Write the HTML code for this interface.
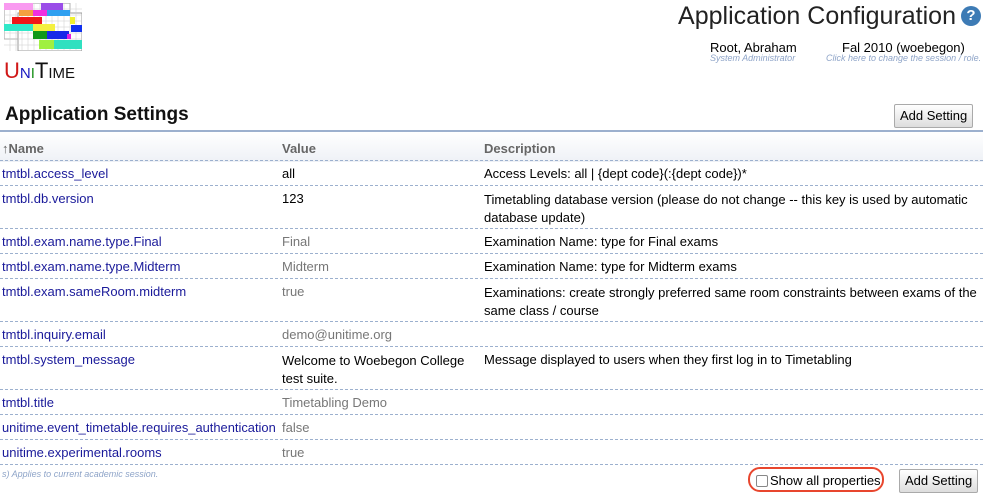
<!DOCTYPE html>
<html><head><meta charset="utf-8"><style>
body{margin:0;width:983px;height:495px;position:relative;font-family:"Liberation Sans",Arial,sans-serif;font-size:13px;background:#fff;overflow:hidden}
.a{position:absolute;white-space:nowrap}
.n{color:#1a1a9a}
.g{color:#777}
.line{position:absolute;left:0;width:983px;border-top:1px dashed #9cb0ce;height:0}
.btn{position:absolute;border:1px solid #aaa;border-radius:2px;background:linear-gradient(#fff,#ddd);font-size:13px;padding:3px 5px;line-height:16px}
</style></head><body>
<svg class="a" style="left:4px;top:3px" width="78" height="48" viewBox="0 0 78 48">
<rect x="0" y="0" width="66" height="36" fill="#fff" stroke="#999"/>
<rect x="14" y="10" width="64" height="38" fill="#fff" stroke="#999"/>
<g stroke="#ccc" stroke-width="0.5"><path d="M0 6H78M0 12H78M0 18H78M0 24H78M0 30H78M0 36H78M0 42H78M6 0V48M12 0V48M18 0V48M24 0V48M30 0V48M36 0V48M42 0V48M48 0V48M54 0V48M60 0V48M66 0V48M72 0V48"/></g>
<rect x="0" y="0" width="29" height="7" fill="#f99af0"/>
<rect x="37" y="0" width="22" height="7" fill="#9a4de8"/>
<rect x="15" y="7" width="14" height="6" fill="#f4a040"/>
<rect x="29" y="7" width="14" height="6" fill="#f030e0"/>
<rect x="43" y="7" width="23" height="6" fill="#30a0f0"/>
<rect x="8" y="14" width="30" height="7" fill="#f01818"/>
<rect x="66" y="14" width="5" height="7" fill="#f0f030"/>
<rect x="0" y="21" width="29" height="7" fill="#30e8c8"/>
<rect x="29" y="21" width="22" height="7" fill="#f4f040"/>
<rect x="67" y="22" width="11" height="7" fill="#1030f0"/>
<rect x="29" y="28" width="14" height="8" fill="#109818"/>
<rect x="43" y="28" width="22" height="8" fill="#1828e8"/>
<rect x="63" y="31" width="4" height="5" fill="#e020e0"/>
<rect x="35" y="37" width="15" height="9" fill="#a0f040"/>
<rect x="50" y="37" width="28" height="9" fill="#30e0c0"/>
</svg>
<div class="a" style="left:4px;top:58px;font-size:22px;font-family:'Liberation Sans',sans-serif"><span style="color:#d01818">U</span><span style="color:#1818c0;font-size:15px">N</span><span style="color:#189018;font-size:15px">I</span><span style="color:#111">T</span><span style="color:#111;font-size:15px">IME</span></div>
<div class="a" style="right:27px;top:2px;font-size:25px;color:#222">Application Configuration</div>
<div class="a" style="left:961px;top:6px;width:20px;height:20px;border-radius:50%;background:#3d7bb5;color:#fff;font-weight:bold;font-size:15px;text-align:center;line-height:20px">?</div>
<div class="a" style="left:710px;top:40px;font-size:13px">Root, Abraham</div>
<div class="a" style="left:710px;top:53px;font-size:9px;color:#8ea4c8;font-style:italic">System Administrator</div>
<div class="a" style="left:842px;top:40px;font-size:13px">Fal 2010 (woebegon)</div>
<div class="a" style="left:826px;top:53px;font-size:9px;color:#8ea4c8;font-style:italic">Click here to change the session / role.</div>
<div class="a" style="left:5px;top:104px;font-size:19px;font-weight:bold;color:#111">Application Settings</div>
<div class="btn" style="left:894px;top:104px">Add Setting</div>
<div class="a" style="left:0;top:130px;width:983px;height:30px;border-top:2px solid #9cb0ce;background:linear-gradient(#fff,#eef1f6)"></div>
<div class="a" style="left:2px;top:141px;font-weight:bold;color:#666">↑Name</div>
<div class="a" style="left:282px;top:141px;font-weight:bold;color:#666">Value</div>
<div class="a" style="left:484px;top:141px;font-weight:bold;color:#666">Description</div>
<div class="line" style="top:160px"></div>
<div class="a n" style="left:2px;top:166px">tmtbl.access_level</div><div class="a" style="left:282px;top:166px">all</div><div class="a" style="left:484px;top:166px">Access Levels: all | {dept code}(:{dept code})*</div>
<div class="line" style="top:185px"></div>
<div class="a n" style="left:2px;top:191px">tmtbl.db.version</div><div class="a" style="left:282px;top:191px">123</div><div class="a" style="left:484px;top:191px;line-height:18px">Timetabling database version (please do not change -- this key is used by automatic<br>database update)</div>
<div class="line" style="top:228px"></div>
<div class="a n" style="left:2px;top:234px">tmtbl.exam.name.type.Final</div><div class="a g" style="left:282px;top:234px">Final</div><div class="a" style="left:484px;top:234px">Examination Name: type for Final exams</div>
<div class="line" style="top:253px"></div>
<div class="a n" style="left:2px;top:259px">tmtbl.exam.name.type.Midterm</div><div class="a g" style="left:282px;top:259px">Midterm</div><div class="a" style="left:484px;top:259px">Examination Name: type for Midterm exams</div>
<div class="line" style="top:278px"></div>
<div class="a n" style="left:2px;top:284px">tmtbl.exam.sameRoom.midterm</div><div class="a g" style="left:282px;top:284px">true</div><div class="a" style="left:484px;top:284px;line-height:18px">Examinations: create strongly preferred same room constraints between exams of the<br>same class / course</div>
<div class="line" style="top:321px"></div>
<div class="a n" style="left:2px;top:327px">tmtbl.inquiry.email</div><div class="a g" style="left:282px;top:327px">demo@unitime.org</div>
<div class="line" style="top:346px"></div>
<div class="a n" style="left:2px;top:352px">tmtbl.system_message</div><div class="a" style="left:282px;top:352px;line-height:18px">Welcome to Woebegon College<br>test suite.</div><div class="a" style="left:484px;top:352px">Message displayed to users when they first log in to Timetabling</div>
<div class="line" style="top:389px"></div>
<div class="a n" style="left:2px;top:395px">tmtbl.title</div><div class="a g" style="left:282px;top:395px">Timetabling Demo</div>
<div class="line" style="top:414px"></div>
<div class="a n" style="left:2px;top:420px;font-size:12.9px">unitime.event_timetable.requires_authentication</div><div class="a g" style="left:282px;top:420px">false</div>
<div class="line" style="top:439px"></div>
<div class="a n" style="left:2px;top:445px">unitime.experimental.rooms</div><div class="a g" style="left:282px;top:445px">true</div>
<div class="line" style="top:464px"></div>
<div class="a" style="left:2px;top:469px;font-size:9px;color:#8ea4c8;font-style:italic">s) Applies to current academic session.</div>
<div class="a" style="left:748px;top:467px;width:136px;height:25px;border:2px solid #e8462e;border-radius:12px;box-sizing:border-box"></div>
<div class="a" style="left:756px;top:475px;width:10px;height:10px;border:1px solid #888;border-radius:2px;background:#fff"></div>
<div class="a" style="left:770px;top:473px">Show all properties</div>
<div class="btn" style="left:899px;top:469px">Add Setting</div>
</body></html>
